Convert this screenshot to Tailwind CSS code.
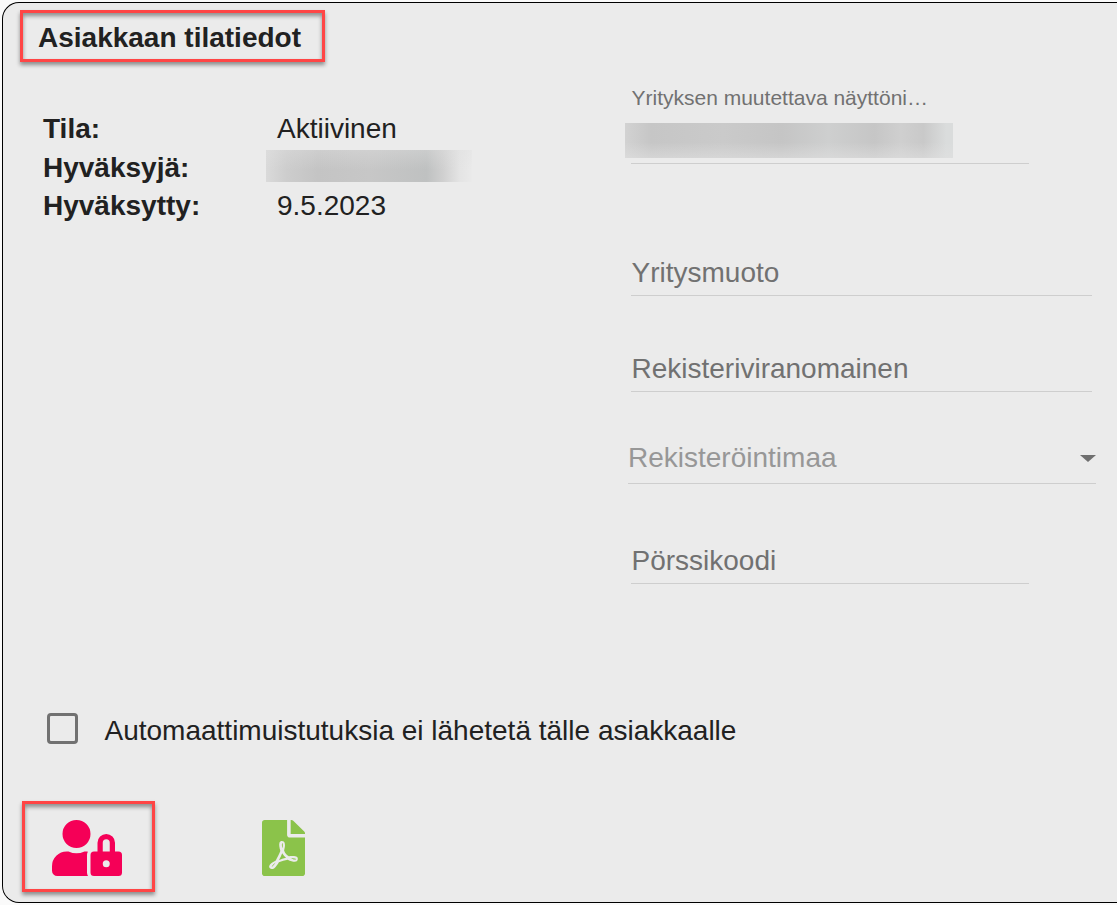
<!DOCTYPE html>
<html lang="fi">
<head>
  <meta charset="UTF-8" />
  <meta name="viewport" content="width=device-width, initial-scale=1" />
  <title>Asiakkaan tilatiedot</title>
  <script src="https://cdn.jsdelivr.net/npm/@tailwindcss/browser@4"></script>
</head>
<body class="bg-[#fafafa] h-[905px] overflow-hidden pl-[2px] pt-[2px] font-['Liberation_Sans',Arial,sans-serif] text-[28px] text-[#212121]">

  <div class="h-[901px] flex flex-col bg-[#ebebeb] border border-r-0 border-black rounded-l-[17px]">
    <div class="flex h-[697px]">

      <!-- Tilatiedot -->
      <section class="w-[625px] shrink-0 pl-[17px] pt-[7px]">
        <h1 class="w-[305px] h-[52px] flex items-center pl-[15px] pt-[3px] border-3 border-[#ff4545] font-bold shadow-[0_3px_4px_rgba(0,0,0,0.4),inset_0_3px_4px_rgba(0,0,0,0.4)]">Asiakkaan tilatiedot</h1>
        <dl class="mt-[48px] pl-[23px] grid grid-cols-[223px_1fr] auto-rows-[38.5px] leading-[38.5px]">
          <dt class="font-bold">Tila:</dt>
          <dd class="pl-[11px]">Aktiivinen</dd>
          <dt class="font-bold">Hyväksyjä:</dt>
          <dd class="mt-px w-[206px] h-[32px] bg-[linear-gradient(180deg,rgba(225,225,225,0.35)_0%,transparent_60%),linear-gradient(90deg,#dadada_0%,#cdcdcd_10%,#c4c4c4_25%,#c7c7c7_50%,#bfc1c1_78%,#d0d0d0_86%,#e4e4e4_94%,#eaeaea_100%)]"></dd>
          <dt class="font-bold">Hyväksytty:</dt>
          <dd class="pl-[11px]">9.5.2023</dd>
        </dl>
      </section>

      <!-- Yrityksen kentät -->
      <section class="flex flex-col pt-[82px] pl-[3px] text-[#717171]">
        <div class="w-[398px] h-[79px] border-b border-[#cecece]">
          <p class="pl-[0.5px] text-[21px] leading-[26px] whitespace-nowrap">Yrityksen muutettava näyttöni…</p>
          <div class="mt-[12px] -ml-[6px] w-[328px] h-[35px] bg-[linear-gradient(180deg,transparent_55%,rgba(225,225,225,0.55)_100%),linear-gradient(90deg,#d2d2d2_0%,#c6c6c6_8%,#cacaca_30%,#c5c5c5_48%,#cecfcf_62%,#c6c6c6_76%,#cfcfcf_84%,#c9c9c9_91%,#dadcdc_98%)]"></div>
        </div>
        <div class="mt-[92px] w-[461px] h-[40px] pl-[0.5px] leading-[34px] border-b border-[#cecece]">Yritysmuoto</div>
        <div class="mt-[56px] w-[461px] h-[40px] pl-[0.5px] leading-[34px] border-b border-[#cecece]">Rekisteriviranomainen</div>
        <div class="mt-[49px] -ml-[3px] w-[468px] h-[43px] flex justify-between leading-[34px] text-[#979797] border-b border-[#cecece]">
          Rekisteröintimaa
          <svg class="mt-[14px] w-[16px] h-[7px] fill-[#6f6f6f]" viewBox="0 0 16 7"><path d="M0 0h16L8 7z" /></svg>
        </div>
        <div class="mt-[60px] w-[398px] h-[40px] pl-[0.5px] leading-[34px] border-b border-[#cecece]">Pörssikoodi</div>
      </section>
    </div>

    <label class="flex items-center h-[60px] pl-[44px]">
      <span class="w-[31px] h-[31px] -mt-[3px] border-3 border-[#717171] rounded-[4px]"></span>
      <span class="pl-[26.5px] pt-[2px]">Automaattimuistutuksia ei lähetetä tälle asiakkaalle</span>
    </label>

    <!-- Toiminnot -->
    <div class="flex pl-[19px] pt-[41px]">
      <button class="w-[133px] h-[91px] pl-[27px] pt-[2px] border-3 border-[#ff4545] shadow-[0_3px_4px_rgba(0,0,0,0.4),inset_0_3px_4px_rgba(0,0,0,0.4)]">
        <svg class="w-[70px] h-[56px] fill-[#f50057]" viewBox="0 0 640 512"><path d="M224 256A128 128 0 1 0 96 128a128 128 0 0 0 128 128zm96 64a63.08 63.08 0 0 1 8.1-30.5c-4.8-.5-9.5-1.5-14.5-1.5h-16.7a174.08 174.08 0 0 1-145.8 0h-16.7A134.43 134.43 0 0 0 0 422.4V464a48 48 0 0 0 48 48h280.9a63.54 63.54 0 0 1-8.9-32zm288-32h-32v-80a80 80 0 0 0-160 0v80h-32a32 32 0 0 0-32 32v160a32 32 0 0 0 32 32h224a32 32 0 0 0 32-32V320a32 32 0 0 0-32-32zM496 432a32 32 0 1 1 32-32 32 32 0 0 1-32 32zm32-144h-64v-80a32 32 0 0 1 64 0z" /></svg>
      </button>
      <button class="ml-[106.5px] mt-[19px] w-[43px] h-[56px]">
        <svg class="w-[43px] h-[56px] fill-[#8bc34a]" viewBox="0 0 384 512" preserveAspectRatio="none"><path d="M181.9 256.1c-5-16-4.9-46.9-2-46.9 8.4 0 7.6 36.9 2 46.9zm-1.7 47.2c-7.7 20.2-17.3 43.3-28.4 62.7 18.3-7 39-17.2 62.9-21.9-12.7-9.6-24.9-23.4-34.5-40.8zM86.1 428.1c0 .8 13.2-5.4 34.9-40.2-6.7 6.3-29.1 24.5-34.9 40.2zM248 160h136v328c0 13.3-10.7 24-24 24H24c-13.3 0-24-10.7-24-24V24C0 10.7 10.7 0 24 0h200v136c0 13.2 10.8 24 24 24zm-8 171.8c-20-12.2-33.3-29-42.7-53.8 4.5-18.5 11.6-46.6 6.2-64.2-4.7-29.4-42.4-26.5-47.8-6.8-5 18.3-.4 44.1 8.1 77-11.6 27.6-28.7 64.6-40.8 85.8-.1 0-.1.1-.2.1-27.1 13.9-73.6 44.5-54.5 68 5.6 6.9 16 10 21.5 10 17.9 0 35.7-18 61.1-61.8 25.8-8.5 54.1-19.1 79-23.2 21.7 11.8 47.1 19.5 64 19.5 29.2 0 31.2-32 19.7-43.4-13.9-13.6-54.3-9.7-73.6-7.2zM377 105L279 7c-4.5-4.5-10.6-7-17-7h-6v128h128v-6.1c0-6.3-2.5-12.4-7-16.9zm-74.1 255.3c4.1-2.7-2.5-11.9-42.8-9 37.1 15.8 42.8 9 42.8 9z" /></svg>
      </button>
    </div>
  </div>

</body>
</html>
